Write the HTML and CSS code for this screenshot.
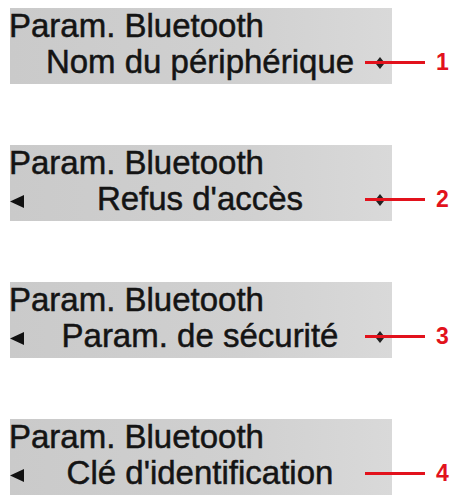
FILE: index.html
```html
<!DOCTYPE html>
<html lang="fr">
<head>
    <meta charset="UTF-8">
    <meta name="viewport" content="width=device-width, initial-scale=1.0">
    <title>Param. Bluetooth</title>
    <link rel="stylesheet" href="styles.css">
</head>
<body>
    <div class="screens">
        <div class="lcd">
            <div class="lcd-title">Param. Bluetooth</div>
            <div class="lcd-item">
                <span class="nav-left"></span>
                <span class="item-label">Nom du périphérique</span>
                <span class="nav-right">
                    <svg width="8" height="12" viewBox="0 0 8 12"><path d="M4 0 L8 5 L0 5 Z M0 7 L8 7 L4 12 Z" fill="#222"/></svg>
                </span>
                <div class="callout"><span class="callout-line"></span><span class="callout-num">1</span></div>
            </div>
        </div>

        <div class="lcd">
            <div class="lcd-title">Param. Bluetooth</div>
            <div class="lcd-item">
                <span class="nav-left"><svg width="14" height="13" viewBox="0 0 14 13"><path d="M0 6.5 L14 0 L14 13 Z" fill="#111"/></svg></span>
                <span class="item-label">Refus d'accès</span>
                <span class="nav-right">
                    <svg width="8" height="12" viewBox="0 0 8 12"><path d="M4 0 L8 5 L0 5 Z M0 7 L8 7 L4 12 Z" fill="#222"/></svg>
                </span>
                <div class="callout"><span class="callout-line"></span><span class="callout-num">2</span></div>
            </div>
        </div>

        <div class="lcd">
            <div class="lcd-title">Param. Bluetooth</div>
            <div class="lcd-item">
                <span class="nav-left"><svg width="14" height="13" viewBox="0 0 14 13"><path d="M0 6.5 L14 0 L14 13 Z" fill="#111"/></svg></span>
                <span class="item-label">Param. de sécurité</span>
                <span class="nav-right">
                    <svg width="8" height="12" viewBox="0 0 8 12"><path d="M4 0 L8 5 L0 5 Z M0 7 L8 7 L4 12 Z" fill="#222"/></svg>
                </span>
                <div class="callout"><span class="callout-line"></span><span class="callout-num">3</span></div>
            </div>
        </div>

        <div class="lcd">
            <div class="lcd-title">Param. Bluetooth</div>
            <div class="lcd-item">
                <span class="nav-left"><svg width="14" height="13" viewBox="0 0 14 13"><path d="M0 6.5 L14 0 L14 13 Z" fill="#111"/></svg></span>
                <span class="item-label">Clé d'identification</span>
                <span class="nav-right"></span>
                <div class="callout"><span class="callout-line"></span><span class="callout-num">4</span></div>
            </div>
        </div>
    </div>
</body>
</html>
```

FILE: styles.css
```css
body, html {
    margin: 0;
    padding: 0;
    background: #fff;
    overflow: hidden;
    font-family: 'Liberation Sans', Arial, sans-serif;
}

.screens {
    display: flex;
    flex-direction: column;
    gap: 61px;
    padding: 8px 0 0 10px;
}

.lcd {
    width: 382px;
    height: 76px;
    background: linear-gradient(90deg, #cacaca 0%, #d0d0d0 60%, #d9d9d9 100%);
    color: #141414;
    font-size: 33px;
    line-height: 36px;
    -webkit-text-stroke: 0.5px #141414;
}

.lcd-title {
    margin-left: -1px;
    white-space: nowrap;
}

.lcd-item {
    position: relative;
    display: flex;
    align-items: center;
    height: 36px;
}

.nav-left {
    width: 30px;
    display: flex;
    align-items: center;
    justify-content: flex-start;
    padding-top: 4px;
}

.item-label {
    flex: 1;
    text-align: center;
    white-space: nowrap;
}

.nav-right {
    width: 32px;
    display: flex;
    align-items: center;
    justify-content: center;
    padding-top: 2px;
    padding-left: 8px;
    box-sizing: border-box;
}

/* red numbered pointer drawn over the right edge of each screen */
.callout {
    position: absolute;
    left: 355px;
    top: 50%;
    transform: translateY(-50%);
    display: flex;
    align-items: center;
    -webkit-text-stroke: 0;
}

.callout-line {
    width: 60px;
    height: 3px;
    background: #e2121c;
}

.callout-num {
    margin-left: 11px;
    color: #e2121c;
    font-weight: bold;
    font-size: 23px;
    line-height: 22px;
}
```
